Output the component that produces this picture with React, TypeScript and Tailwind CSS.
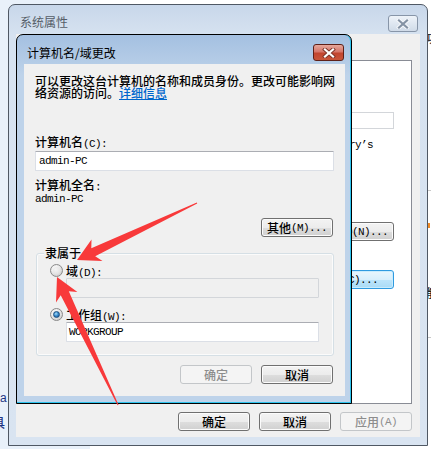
import React from "react";

const CJK = "font-['Noto_Sans_CJK_SC',_'Noto_Sans',_sans-serif]";
const MONO = "font-['Liberation_Mono',_monospace] text-[11px] tracking-[-0.6px]";

function Mixed({ t }: { t: string }) {
  const parts = t.match(/[\x00-\x7F]+|[^\x00-\x7F]+/g) || [];
  return (
    <>
      {parts.map((p, i) =>
        /[\x00-\x7F]/.test(p[0]) ? (
          <span key={i} className={MONO}>
            {p}
          </span>
        ) : (
          <span key={i}>{p}</span>
        )
      )}
    </>
  );
}

function Btn({
  label,
  w = "w-[72px]",
  disabled = false,
  hot = false,
  align = "justify-center",
}: {
  label: string;
  w?: string;
  disabled?: boolean;
  hot?: boolean;
  align?: string;
}) {
  const base = `${w} h-[19px] rounded-[3px] border flex items-center ${align} leading-[12px] text-[12px] whitespace-nowrap shrink-0`;
  if (disabled)
    return (
      <div className={`${base} border-[#c3c6c9] bg-[#f4f4f4] text-[#8d8d8d]`}>
        <Mixed t={label} />
      </div>
    );
  if (hot)
    return (
      <div
        className={`${base} border-[#2f9ae0] text-black bg-[linear-gradient(to_bottom,#e9f6fd_0%,#d8effc_50%,#bde5fb_51%,#a9dbf6_100%)] shadow-[inset_0_0_0_1px_#c9ecfd]`}
      >
        <Mixed t={label} />
      </div>
    );
  return (
    <div
      className={`${base} border-[#707070] text-black bg-[linear-gradient(to_bottom,#f3f3f3_0%,#ececec_50%,#dedede_51%,#d0d0d0_100%)] shadow-[inset_0_0_0_1px_#fcfcfc]`}
    >
      <Mixed t={label} />
    </div>
  );
}

function Radio({ checked }: { checked?: boolean }) {
  return (
    <div className="w-[13px] h-[13px] rounded-full border border-[#8a8a8a] bg-[radial-gradient(circle_at_40%_35%,#ffffff_0%,#ececec_40%,#bdbdbd_100%)] flex items-center justify-center shrink-0">
      {checked ? (
        <div className="w-[7px] h-[7px] rounded-full bg-[radial-gradient(circle_at_40%_35%,#a9def9_0%,#3d8fd0_45%,#0f4a86_100%)] border border-[#1b4f80]" />
      ) : (
        <div className="w-[7px] h-[7px] rounded-full bg-[radial-gradient(circle_at_40%_35%,#f4f4f4_0%,#dcdcdc_100%)]" />
      )}
    </div>
  );
}

function CloseX({ color, outline }: { color: string; outline: string }) {
  return (
    <svg width="14" height="10" viewBox="0 0 14 10">
      <path d="M3 1.5 L11 8.5 M11 1.5 L3 8.5" stroke={outline} strokeWidth="4" strokeLinecap="square" />
      <path d="M3 1.5 L11 8.5 M11 1.5 L3 8.5" stroke={color} strokeWidth="2.2" strokeLinecap="square" />
    </svg>
  );
}

export default function App() {
  return (
    <div
      className={`relative w-[431px] h-[449px] overflow-hidden bg-[linear-gradient(to_right,#e9f1fa_90px,#ffffff_90px)] ${CJK} font-medium text-[12px] leading-[12px] text-black`}
    >
      {/* desktop fragments */}
      <span className="absolute left-[0px] top-[392px] text-[12px] leading-[12px] text-[#1c3584] font-['Liberation_Sans',_sans-serif]">a</span>
      <span className="absolute left-[-7px] top-[417px] text-[12px] leading-[12px] text-[#1c3584]">具</span>
      <span className="absolute left-[426px] top-[32px] text-[12px] leading-[12px] text-[#333]">功</span>
      <div className="absolute left-[428px] top-[190px] w-[3px] h-[1px] bg-[#c8c8c8]" />
      <div className="absolute left-[428px] top-[223px] w-[2px] h-[5px] bg-[#f08a24]" />
      <span className="absolute left-[426px] top-[287px] text-[12px] leading-[12px] text-[#222]">能</span>
      <div className="absolute left-[428px] top-[337px] w-[3px] h-[1px] bg-[#c8c8c8]" />

      {/* outer window: 系统属性 */}
      <div className="absolute left-[8px] top-[4px] w-[420px] h-[442px] border border-[#4f5864] rounded-t-[7px] flex flex-col bg-[linear-gradient(to_bottom,#c8d7ea_0px,#d6e2f0_30px,#d9e4f1_100%)]">
        <div className="h-[29px] shrink-0 flex items-start justify-between pl-[11px] pr-[9px]">
          <span className="mt-[11px] text-[#555d68] font-normal">系统属性</span>
          <div className="mt-[10px] w-[30px] h-[17px] rounded-[3px] border border-[#8795a8] bg-[linear-gradient(to_bottom,#eef3f9_0%,#dfe7f1_50%,#d0dbe8_100%)] flex items-center justify-center">
            <CloseX color="#8492a4" outline="#f6f8fb" />
          </div>
        </div>
        <div className="mx-[7px] h-[403px] bg-[#f0f0f0] flex flex-col pt-[26px]">
          <div className="ml-[8px] mr-[8px] h-[344px] border border-[#898c95] bg-white flex flex-col items-end pr-[17px]">
            <div className="mt-[51px] w-[220px] h-[17px] border border-[#d3d6da] bg-white" />
            <div className="mt-[8px] mr-[21px] h-[12px] whitespace-nowrap">
              <Mixed t={'例如: "Kitchen Computer" 或 '} />
              <span className={MONO}>"Mary’s</span>
            </div>
            <div className="mt-[73px]">
              <Btn label="网络 ID(N)..." w="w-[96px]" align="justify-end pr-[5px]" />
            </div>
            <div className="mt-[29px]">
              <Btn label="更改(C)..." w="w-[92px]" align="justify-end pr-[15px]" hot />
            </div>
          </div>
          <div className="mt-[8px] flex justify-end gap-[9px] pr-[8px]">
            <Btn label="确定" />
            <Btn label="取消" />
            <Btn label="应用(A)" disabled />
          </div>
        </div>
      </div>

      {/* inner dialog: 计算机名/域更改 */}
      <div className="absolute left-[16px] top-[34px] w-[336px] h-[370px] border border-black rounded-t-[7px] flex flex-col bg-[linear-gradient(to_bottom,#a4c0e1_0px,#b6cde7_29px,#bed3ea_40px,#bed3ea_100%)] shadow-[inset_0_-1px_0_#2ec4ee,inset_-1px_0_0_#2ec4ee]">
        <div className="h-[29px] shrink-0 flex items-start justify-between pl-[10px] pr-[7px]">
          <span className="mt-[12px] text-black font-normal">计算机名/域更改</span>
          <div className="mt-[9px] w-[31px] h-[17px] rounded-[3px] border border-[#5e2018] bg-[linear-gradient(to_bottom,#e6a89c_0%,#d6766a_45%,#c2452f_55%,#c8553a_100%)] flex items-center justify-center">
            <CloseX color="#ffffff" outline="#7c3328" />
          </div>
        </div>
        <div className="ml-[7px] w-[321px] h-[332px] bg-[#f0f0f0] flex flex-col pt-[11px] px-[11px]">
          <p className="leading-[12px] whitespace-nowrap">
            <Mixed t="可以更改这台计算机的名称和成员身份。更改可能影响网" />
            <br />
            <Mixed t="络资源的访问。" />
            <span className="text-[#0066cc] underline">详细信息</span>
          </p>
          <div className="mt-[37px] h-[12px] whitespace-nowrap">
            <Mixed t="计算机名(C):" />
          </div>
          <div className="mt-[3px] h-[20px] border border-[#dbdfe6] border-t-[#abadb3] bg-white flex items-center pl-[3px] rounded-[1px]">
            <Mixed t="admin-PC" />
          </div>
          <div className="mt-[8px] h-[12px] whitespace-nowrap">
            <Mixed t="计算机全名:" />
          </div>
          <div className="mt-[2px] h-[12px] flex items-center">
            <Mixed t="admin-PC" />
          </div>
          <div className="mt-[13px] self-end mr-[1px]">
            <Btn label="其他(M)..." />
          </div>
          {/* group box */}
          <div className="relative mt-[16px] ml-[1px] h-[103px] border border-[#d5dfe5] rounded-[3px] shadow-[inset_0_0_0_1px_#fbfbfb] flex flex-col pt-[10px] pl-[13px] pr-[14px]">
            <span className="absolute left-[7px] top-[-7px] px-[1px] bg-[#f0f0f0] leading-[12px]">隶属于</span>
            <div className="h-[13px] flex items-center gap-[3px]">
              <Radio />
              <span className="h-[12px] leading-[12px]">
                <Mixed t="域(D):" />
              </span>
            </div>
            <div className="mt-[1px] ml-[16px] h-[20px] border border-[#d3d6da] bg-[#f0f0f0] rounded-[1px]" />
            <div className="mt-[10px] h-[13px] flex items-center gap-[3px]">
              <Radio checked />
              <span className="h-[12px] leading-[12px]">
                <Mixed t="工作组(W):" />
              </span>
            </div>
            <div className="mt-[1px] ml-[16px] h-[20px] border border-[#dbdfe6] border-t-[#abadb3] bg-white flex items-center pl-[2px] rounded-[1px]">
              <Mixed t="WORKGROUP" />
            </div>
          </div>
          <div className="mt-[9px] flex justify-end gap-[9px] mr-[1px]">
            <Btn label="确定" disabled />
            <Btn label="取消" />
          </div>
        </div>
      </div>

      {/* red annotation arrows */}
      <svg className="absolute left-0 top-0 pointer-events-none" width="431" height="449" viewBox="0 0 431 449">
        <polygon
          points="77,260 102.5,261 95.2,256.3 197.2,203.5 196.8,202.6 91.3,248.2 91.5,239.5"
          fill="#f8393a"
        />
        <polygon
          points="57,277 77.4,292 68.8,291.3 118.5,404.8 117.6,405.2 60.7,295.2 56,302.6"
          fill="#f8393a"
        />
      </svg>
    </div>
  );
}
